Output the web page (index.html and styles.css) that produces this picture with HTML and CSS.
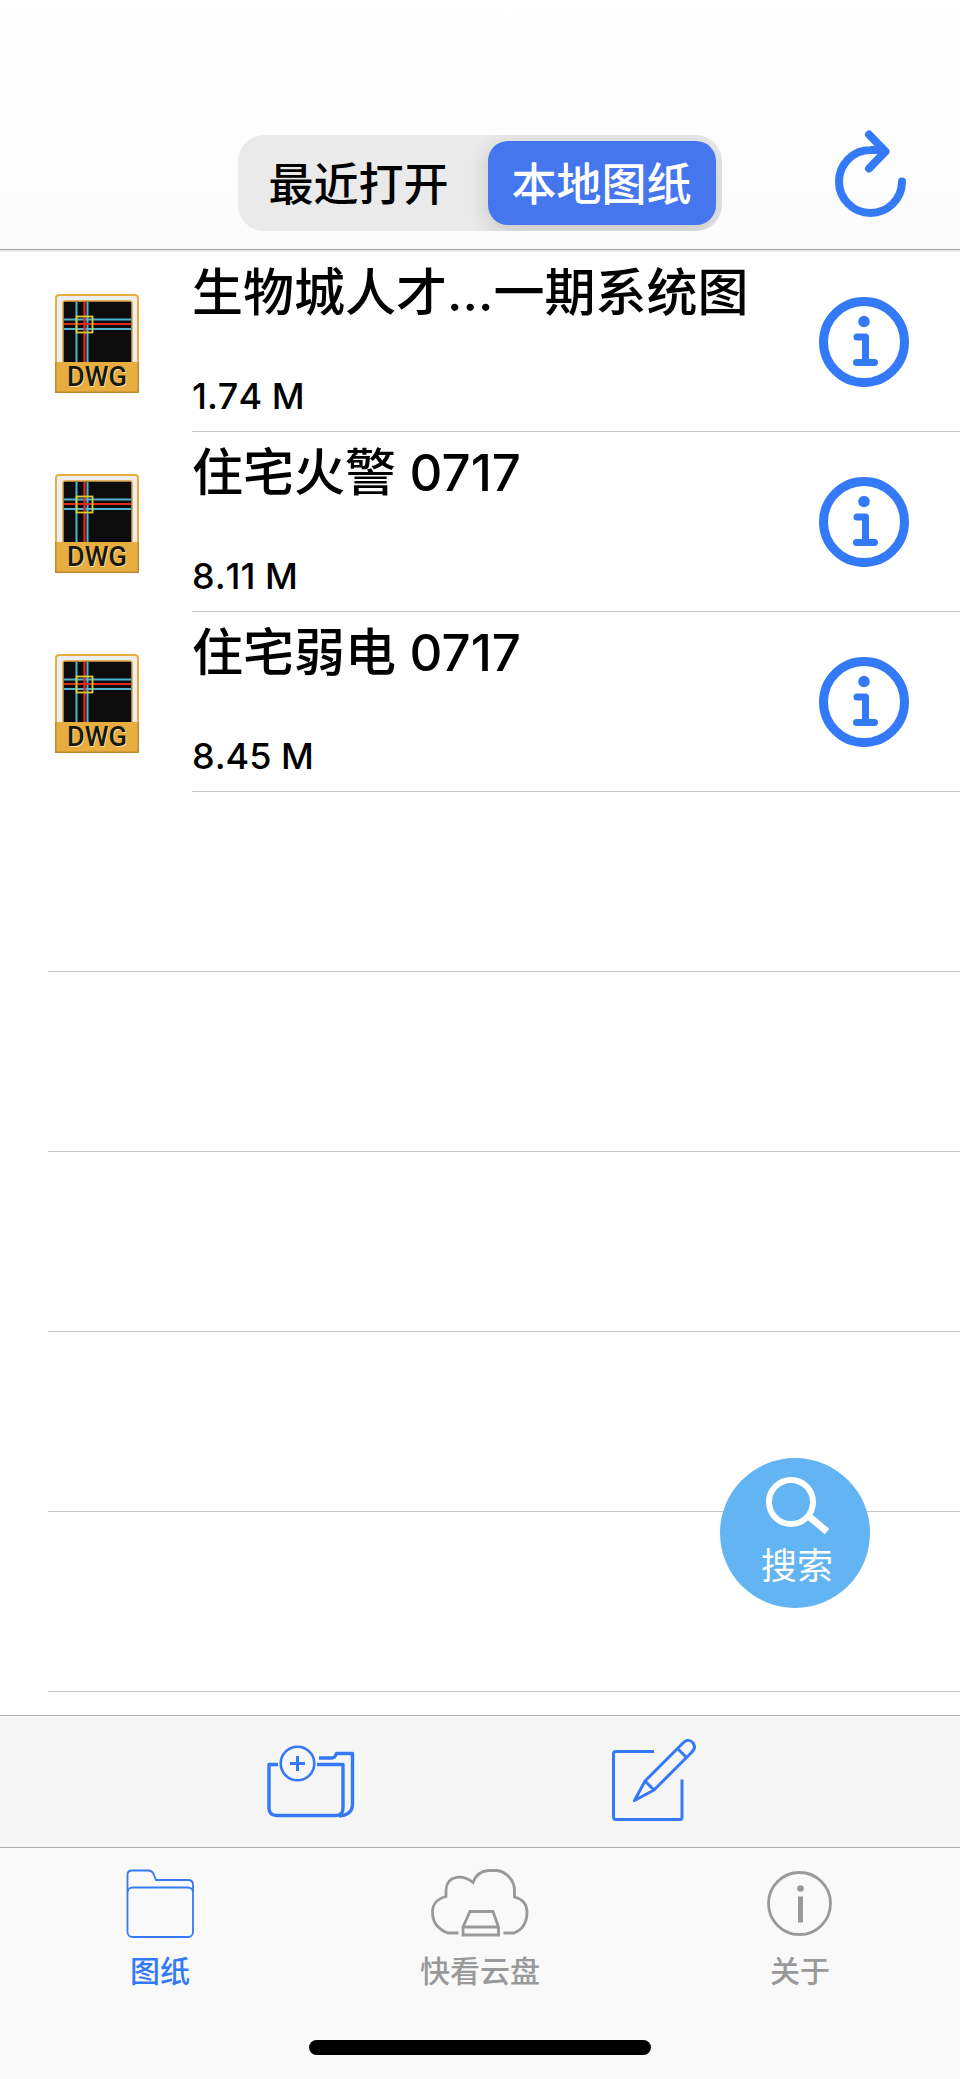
FILE: index.html
```html
<!DOCTYPE html>
<html lang="zh-CN">
<head>
<meta charset="utf-8">
<meta name="viewport" content="width=device-width, initial-scale=1">
<title>本地图纸</title>
<link rel="stylesheet" href="styles.css">
</head>
<body>
<svg class="sprite" aria-hidden="true">
  <symbol id="dwg" viewBox="0 -2 84 101">
    <path d="M1 70V4a3 3 0 0 1 3-3h76a3 3 0 0 1 3 3v66z" fill="#eeeeef" stroke="#e9ad3d" stroke-width="2"/>
    <path d="M8 70V9a2 2 0 0 1 2-2h65a2 2 0 0 1 2 2v61z" fill="#0c0c0c" stroke="#dca23c" stroke-width="1.5"/>
    <path d="M21.500 8v61M32.500 8v61M9 25.500h67M9 35h67" stroke="#4fb4d2" stroke-width="2"/>
    <path d="M29.500 8v61M9 30h67" stroke="#e0281f" stroke-width="2.200"/>
    <rect x="21.500" y="22.500" width="16" height="16" fill="none" stroke="#dcca30" stroke-width="1.800"/>
    <path d="M0 68h84v31H0z" fill="#e8ad40"/>
    <path d="M.75 68v30.250h82.500V68" fill="none" stroke="#bd8a30" stroke-width="1.500"/>
  </symbol>
  <symbol id="info" viewBox="0 0 90 90">
    <circle cx="45" cy="45" r="40.500" fill="none" stroke="#3479f6" stroke-width="9"/>
    <circle cx="45" cy="24.500" r="5.800" fill="#3479f6"/>
    <path d="M38 40h8.500v25M37.500 65.500h18" fill="none" stroke="#3479f6" stroke-width="7" stroke-linecap="round" stroke-linejoin="round"/>
  </symbol>
</svg>

<div class="app">
  <header class="header">
    <div class="segmented" role="tablist">
      <button class="segment" role="tab" aria-selected="false">最近打开</button>
      <button class="segment segment-active" role="tab" aria-selected="true">本地图纸</button>
    </div>
    <button class="refresh" aria-label="刷新">
      <svg class="refresh-icon" viewBox="834 135 72 96" fill="none" stroke="#3479f6" stroke-width="8" stroke-linecap="round" stroke-linejoin="round">
        <path d="M902 181.500A31.500 31.500 0 1 1 870.500 150Q878 149.500 885 151.500"/>
        <path d="M869 134.500L885.500 151.500L869 168.500"/>
      </svg>
    </button>
  </header>

  <main class="content">
    <ul class="files">
      <li class="file">
        <svg class="file-icon" viewBox="0 -2 84 101">
          <use href="#dwg" x="0" y="-2" width="84" height="101"/>
          <text x="42" y="92" text-anchor="middle" class="dwg-text">DWG</text>
        </svg>
        <div class="file-body">
          <div class="file-text">
            <span class="file-name">生物城人才…一期系统图</span>
            <span class="file-size">1.74 M</span>
          </div>
          <button class="info" aria-label="详情"><svg class="info-icon"><use href="#info"/></svg></button>
        </div>
      </li>
      <li class="file">
        <svg class="file-icon" viewBox="0 -2 84 101">
          <use href="#dwg" x="0" y="-2" width="84" height="101"/>
          <text x="42" y="92" text-anchor="middle" class="dwg-text">DWG</text>
        </svg>
        <div class="file-body">
          <div class="file-text">
            <span class="file-name">住宅火警 0717</span>
            <span class="file-size">8.11 M</span>
          </div>
          <button class="info" aria-label="详情"><svg class="info-icon"><use href="#info"/></svg></button>
        </div>
      </li>
      <li class="file">
        <svg class="file-icon" viewBox="0 -2 84 101">
          <use href="#dwg" x="0" y="-2" width="84" height="101"/>
          <text x="42" y="92" text-anchor="middle" class="dwg-text">DWG</text>
        </svg>
        <div class="file-body">
          <div class="file-text">
            <span class="file-name">住宅弱电 0717</span>
            <span class="file-size">8.45 M</span>
          </div>
          <button class="info" aria-label="详情"><svg class="info-icon"><use href="#info"/></svg></button>
        </div>
      </li>
      <li class="blank"></li>
      <li class="blank"></li>
      <li class="blank"></li>
      <li class="blank"></li>
      <li class="blank"></li>
    </ul>
    <button class="search">
      <svg class="search-icon" viewBox="763 1476 68 60" fill="none" stroke="#fff">
        <circle cx="791" cy="1502" r="22" stroke-width="6"/>
        <path d="M809 1516.500L827 1531.500" stroke-width="7"/>
      </svg>
      <span>搜索</span>
    </button>
  </main>

  <div class="toolbar">
    <button class="tool" aria-label="新建文件夹">
      <svg class="tool-icon" viewBox="264 1737 88 88" fill="none" stroke="#3479f6" stroke-width="3" stroke-linejoin="round">
        <path d="M278 1763.500H269V1807Q269 1814.500 277 1814.500H336Q343 1814.500 343 1807V1763.500H317" stroke-width="3.400"/>
        <path d="M319 1757H332Q335 1757 336.500 1752.500H352.500V1804Q352 1814 339 1815" stroke-width="3.400"/>
        <circle cx="297.500" cy="1762.500" r="16.800" stroke-width="2.600"/>
        <path d="M297.500 1755v15M290 1762.500h15"/>
      </svg>
    </button>
    <button class="tool" aria-label="编辑">
      <svg class="tool-icon" viewBox="608 1737 88 88" fill="none" stroke="#3479f6" stroke-width="3" stroke-linejoin="round">
        <path d="M654 1750.500H616Q613.500 1750.500 613.500 1753V1816Q613.500 1818.500 616 1818.500H680Q682 1818.500 682 1816V1778.500"/>
        <path d="M634.500 1799.500L645 1780L683 1742C687 1738 691 1739 693 1742C696 1746 694.500 1749 691 1752L654 1789zM645 1780L654 1789M677.500 1747.500L686 1756"/>
      </svg>
    </button>
  </div>

  <nav class="tabbar">
    <div class="tabs">
      <a class="tab tab-active" href="#drawings" aria-current="page">
        <svg class="tab-icon" viewBox="110 1865 100 76" fill="none" stroke="currentColor" stroke-width="1.800">
          <path d="M127.500 1892V1875Q127.500 1870.500 132 1870.500H148Q152.500 1870.500 154 1875L156 1880H188Q193 1880 193 1885V1892"/>
          <rect x="127.500" y="1887.500" width="65.500" height="49.500" rx="5"/>
        </svg>
        <span>图纸</span>
      </a>
      <a class="tab" href="#cloud">
        <svg class="tab-icon" viewBox="430 1865 100 76" fill="none" stroke="currentColor" stroke-width="2.800">
          <path d="M458.500 1933H448C437 1929 432.500 1921 432.500 1912C432.500 1904 438 1898.500 446 1896.500V1890C447 1874 464 1875 473 1882.500C476 1874 483 1871 488 1870.500H497C508 1872 514.500 1882 514.500 1890V1897C522 1899 527 1904 527 1912C527 1921 524 1929 514 1933H503.500"/>
          <path d="M470 1911.500H493L498.500 1927V1935H463V1927zM463 1927H498.500"/>
        </svg>
        <span>快看云盘</span>
      </a>
      <a class="tab" href="#about">
        <svg class="tab-icon" viewBox="750 1865 100 76" fill="none" stroke="currentColor" stroke-width="2.800">
          <circle cx="799.500" cy="1903.500" r="31"/>
          <circle cx="800.500" cy="1888.500" r="3.300" fill="currentColor" stroke="none"/>
          <path d="M800.500 1896.500V1922.500" stroke-width="5"/>
        </svg>
        <span>关于</span>
      </a>
    </div>
    <div class="home-indicator"></div>
  </nav>
</div>
</body>
</html>
```

FILE: styles.css
```css
* {
  box-sizing: border-box;
}

body {
  margin: 0;
  background: #fff;
  color: #000;
  font-family: Inter, "Noto Sans CJK SC", sans-serif;
}

button {
  margin: 0;
  padding: 0;
  border: 0;
  background: none;
  color: inherit;
  font: inherit;
  cursor: pointer;
}

svg {
  display: block;
  flex: none;
}

.sprite {
  position: absolute;
  width: 0;
  height: 0;
}

.app {
  display: flex;
  flex-direction: column;
  min-height: 100vh;
}

.header {
  display: grid;
  grid-template-columns: 1fr auto 1fr;
  padding: 135px 54px 18px;
  background: linear-gradient(#fff, #fbfbfb);
  border-bottom: 1px solid #a4a4a4;
  box-shadow: 0 2px 0 #ebebeb;
}

.segmented {
  grid-column: 2;
  display: flex;
  gap: 15px;
  height: 96px;
  padding: 6px;
  border-radius: 26px;
  background: #eaeaea;
  overflow: hidden;
}

.segment {
  padding: 0 24px 4px;
  border-radius: 20px;
  font-size: 45px;
  font-weight: 500;
  white-space: nowrap;
}

.segment-active {
  background: #4676ed;
  color: #fff;
  box-shadow: 0 6px 20px rgba(0, 0, 0, 0.16);
}

.refresh {
  justify-self: end;
}

.refresh-icon {
  width: 72px;
  height: 96px;
  overflow: visible;
}

.content {
  position: relative;
  flex: 1;
  padding: 2px 0 23px;
}

.files {
  margin: 0;
  padding: 0;
  list-style: none;
}

.file {
  display: flex;
  align-items: center;
  gap: 53px;
  height: 180px;
  padding-left: 55px;
}

.file-icon {
  width: 84px;
  height: 101px;
}

.dwg-text {
  fill: #17180c;
  font-family: Roboto, sans-serif;
  font-size: 27px;
  font-weight: 500;
  text-shadow: 1px 1px 0 #f7dca6;
}

.file-body {
  display: flex;
  flex: 1;
  align-items: center;
  justify-content: space-between;
  min-width: 0;
  height: 100%;
  padding-right: 51px;
  border-bottom: 1px solid #c6c6c8;
}

.file-text {
  display: flex;
  flex-direction: column;
  justify-content: space-between;
  height: 100%;
  padding: 11px 0;
}

.file-name {
  font-size: 51px;
  font-weight: 500;
  line-height: 60px;
  white-space: nowrap;
}

.file-size {
  font-size: 36px;
  font-weight: 500;
  font-kerning: none;
  line-height: 48px;
}

.info-icon {
  width: 90px;
  height: 90px;
}

.blank {
  height: 180px;
  margin-left: 48px;
  border-bottom: 1px solid #c6c6c8;
}

.search {
  position: absolute;
  right: 90px;
  bottom: 107px;
  display: flex;
  flex-direction: column;
  align-items: center;
  width: 150px;
  height: 150px;
  padding: 18px 0 0 4px;
  border-radius: 50%;
  background: #63b4f2;
  color: #fff;
  font-size: 36px;
  line-height: 60px;
}

.search-icon {
  width: 68px;
  height: 60px;
}

.toolbar {
  display: flex;
  align-items: center;
  justify-content: center;
  gap: 256px;
  height: 132px;
  border-top: 1px solid #b0b0b0;
  background: #f6f6f6;
}

.tool-icon {
  width: 88px;
  height: 88px;
  overflow: visible;
}

.tabbar {
  display: flex;
  flex-direction: column;
  align-items: center;
  justify-content: space-between;
  height: 232px;
  padding: 17px 0 24px;
  border-top: 1px solid #acacac;
  background: #f9f9f9;
}

.tabs {
  display: grid;
  grid-template-columns: repeat(3, 1fr);
  width: 100%;
}

.tab {
  display: flex;
  flex-direction: column;
  align-items: center;
  gap: 12px;
  color: #999;
  font-size: 30px;
  font-weight: 500;
  line-height: 36px;
  text-decoration: none;
}

.tab-active {
  color: #3479f6;
}

.tab-icon {
  width: 100px;
  height: 76px;
}

.home-indicator {
  width: 342px;
  height: 15px;
  border-radius: 8px;
  background: #000;
}
```
